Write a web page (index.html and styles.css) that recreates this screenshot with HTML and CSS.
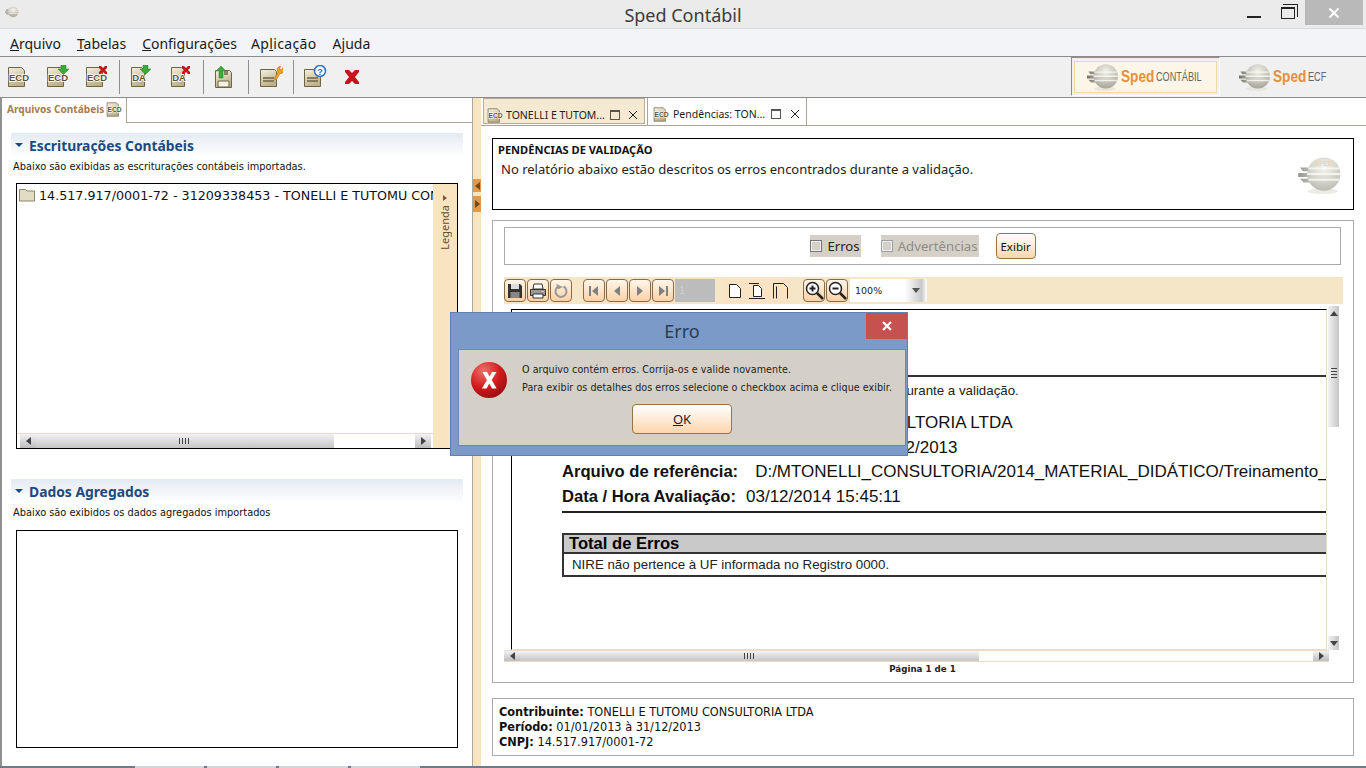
FILE: index.html
```html
<!DOCTYPE html>
<html lang="pt-BR">
<head>
<meta charset="utf-8">
<title>Sped Contábil</title>
<link rel="stylesheet" href="styles.css">
</head>
<body>
<svg class="defs" width="0" height="0" aria-hidden="true">
  <defs>
    <linearGradient id="docFill" x1="0" y1="0" x2="0.4" y2="1"><stop offset="0" stop-color="#f5f1e2"/><stop offset="1" stop-color="#bdb18a"/></linearGradient>
    <linearGradient id="streak" x1="0" y1="0" x2="1" y2="0"><stop offset="0" stop-color="#6f6e66"/><stop offset="1" stop-color="#b9b7ac"/></linearGradient>
    <radialGradient id="globeFill" cx="0.5" cy="0.3" r="0.75"><stop offset="0" stop-color="#f3f2ea"/><stop offset="1" stop-color="#a3a196"/></radialGradient>
    <radialGradient id="errFill" cx="0.35" cy="0.25" r="0.85"><stop offset="0" stop-color="#f0706a"/><stop offset="0.55" stop-color="#d01a1c"/><stop offset="1" stop-color="#8e0c10"/></radialGradient>
    <symbol id="ecd" viewBox="0 0 24 24">
      <path d="M1.500 2.500h13l3 3v16h-16z" fill="url(#docFill)" stroke="#6f6545"/>
      <text x="12" y="16" text-anchor="middle" class="ic-label">ECD</text>
    </symbol>
    <symbol id="da" viewBox="0 0 24 24">
      <path d="M3.500 2.500h10l3 3v16h-13z" fill="url(#docFill)" stroke="#6f6545"/>
      <text x="11" y="16" text-anchor="middle" class="ic-label">DA</text>
    </symbol>
    <symbol id="down" viewBox="0 0 24 24"><path d="M15 0h5v4h3l-5.500 5.500L12 4h3z" fill="#3fa83a" stroke="#2f7f2c" stroke-width=".5"/></symbol>
    <symbol id="redx" viewBox="0 0 24 24"><path d="M14 1l2 0 2 2 2-2 2 0 0 2-2 2 2 2v2h-2l-2-2-2 2h-2v-2l2-2-2-2z" fill="#c4161c"/></symbol>
    <symbol id="globe" viewBox="0 0 46 40">
      <ellipse cx="26" cy="37" rx="16" ry="3" fill="#e6e6de"/>
      <path d="M2 12h14v4H5zM0 18h16v4H0zM2 24h14v4H6z" fill="url(#streak)"/>
      <circle cx="27" cy="19" r="17.500" fill="url(#globeFill)"/>
      <path d="M11 13h32M9.500 19h35M11 25h32" stroke="#fbfbf6" stroke-width="2" opacity=".8"/>
    </symbol>
    <symbol id="folder" viewBox="0 0 16 14"><path d="M.5 3V1.500h6l1.500 1.500h7.500v10H.5z" fill="#e2dcc2" stroke="#8b8468"/></symbol>
  </defs>
</svg>
<div class="app">
  <header class="titlebar">
    <svg class="app-icon" width="14" height="12" viewBox="0 0 46 40"><use href="#globe"/></svg>
    <span class="app-title">Sped Contábil</span>
    <div class="win-buttons">
      <span class="win-min"></span>
      <span class="win-max"></span>
      <span class="win-close"><svg width="12" height="12" viewBox="0 0 12 12"><path d="M1.500 1.500l9 9M10.500 1.500l-9 9" stroke="#fff" stroke-width="2"/></svg></span>
    </div>
  </header>
  <nav class="menubar">
    <span><u>A</u>rquivo</span><span><u>T</u>abelas</span><span><u>C</u>onfigurações</span><span class="menu-app">Ap<u>l</u>icação</span><span>A<u>j</u>uda</span>
  </nav>
  <div class="toolbar">
    <div class="tb-group g1">
      <svg class="tb-icon" viewBox="0 0 24 24"><use href="#ecd"/></svg>
      <svg class="tb-icon" viewBox="0 0 24 24"><use href="#ecd"/><use href="#down"/></svg>
      <svg class="tb-icon" viewBox="0 0 24 24"><use href="#ecd"/><use href="#redx"/></svg>
    </div>
    <div class="tb-group g2">
      <svg class="tb-icon" viewBox="0 0 24 24"><use href="#da"/><use href="#down"/></svg>
      <svg class="tb-icon" viewBox="0 0 24 24"><use href="#da"/><use href="#redx"/></svg>
    </div>
    <div class="tb-group g3">
      <svg class="tb-icon" viewBox="0 0 24 24">
        <path d="M4.500 5.500h14l2 2v15h-16z" fill="url(#docFill)" stroke="#6f6545"/>
        <path d="M7 16h11v6H7z" fill="#f5f1e2" stroke="#6f6545"/><path d="M13 6h4v4h-4z" fill="#8d8366"/>
        <path d="M10 1l5 5h-3v7H8V6H5z" fill="#3fa83a" stroke="#2f7f2c" stroke-width=".5"/>
      </svg>
    </div>
    <div class="tb-group g4">
      <svg class="tb-icon" viewBox="0 0 24 24">
        <path d="M1.500 4.500h14l2 2v15h-16z" fill="url(#docFill)" stroke="#6f6545"/>
        <path d="M4 13h11M4 16h11" stroke="#6f6545" stroke-width="1.500"/>
        <path d="M15 14l4-7a3.500 3.500 0 0 1 .5-5l2-1-1 3 2 1 1.500-2.500a3.500 3.500 0 0 1-3 6l-3.500 6z" fill="#ee9f21" stroke="#a86c10" stroke-width=".5"/>
      </svg>
    </div>
    <div class="tb-group g5">
      <svg class="tb-icon" viewBox="0 0 24 24">
        <path d="M1.500 4.500h14l2 2v15h-16z" fill="url(#docFill)" stroke="#6f6545"/>
        <path d="M4 13h11M4 16h11" stroke="#6f6545" stroke-width="1.500"/>
        <circle cx="17" cy="6" r="5.500" fill="#fff" stroke="#2f6fc0" stroke-width="1.500"/>
        <text x="17" y="9.500" text-anchor="middle" class="ic-help">?</text>
      </svg>
      <svg class="tb-icon" viewBox="0 0 24 24"><path d="M5 5h4l3 3 3-3h4v2l-4 5 4 5v2h-4l-3-3-3 3H5v-2l4-5-4-5z" fill="#c4161c"/></svg>
    </div>
    <div class="brand-tabs">
      <div class="brand active">
        <div class="brand-inner">
          <svg width="32" height="28" viewBox="0 0 46 40"><use href="#globe"/></svg>
          <span class="brand-sped">Sped</span><span class="brand-sub">CONTÁBIL</span>
        </div>
      </div>
      <div class="brand">
        <div class="brand-inner plain">
          <svg width="32" height="28" viewBox="0 0 46 40"><use href="#globe"/></svg>
          <span class="brand-sped">Sped</span><span class="brand-sub ecf">ECF</span>
        </div>
      </div>
    </div>
  </div>
  <main class="workspace">
    <section class="left-pane">
      <div class="left-tabs">
        <div class="left-tab">
          <span>Arquivos Contábeis</span>
          <svg width="17" height="17" viewBox="0 0 24 24"><use href="#ecd"/></svg>
        </div>
      </div>
      <div class="section-head"><span class="tri"></span>Escriturações Contábeis</div>
      <p class="section-desc">Abaixo são exibidas as escriturações contábeis importadas.</p>
      <div class="list-box tall">
        <div class="list-body">
          <div class="list-scroll">
            <div class="tree-row">
              <svg class="tree-icon" width="16" height="14" viewBox="0 0 16 14"><use href="#folder"/></svg>
              <span class="tree-text">14.517.917/0001-72 - 31209338453 - TONELLI E TUTOMU CONSULTORIA LTDA</span>
            </div>
          </div>
          <div class="hscroll small">
            <span class="arrow-l"></span>
            <span class="thumb left-thumb"><i class="grip"></i></span>
            <span class="arrow-r"></span>
          </div>
        </div>
        <div class="legend"><span class="legend-arrow"></span><span class="legend-text">Legenda</span></div>
      </div>
      <div class="section-head second"><span class="tri"></span>Dados Agregados</div>
      <p class="section-desc">Abaixo são exibidos os dados agregados importados</p>
      <div class="list-box short"></div>
    </section>
    <div class="splitter">
      <span class="split-btn top"><i class="tri-l"></i></span>
      <span class="split-btn"><i class="tri-r"></i></span>
    </div>
    <section class="right-pane">
      <div class="doc-tabs">
        <div class="doc-tab inactive">
          <svg class="tab-icon" width="17" height="17" viewBox="0 0 24 24"><use href="#ecd"/></svg>
          <span class="doc-tab-text">TONELLI E TUTOM...</span>
          <span class="tab-max"></span>
          <svg class="tab-x" width="10" height="10" viewBox="0 0 10 10"><path d="M1 1l8 8M9 1l-8 8" stroke="#222" stroke-width="1"/></svg>
        </div>
        <div class="doc-tab">
          <svg class="tab-icon" width="17" height="17" viewBox="0 0 24 24"><use href="#ecd"/></svg>
          <span class="doc-tab-text">Pendências: TON...</span>
          <span class="tab-max"></span>
          <svg class="tab-x" width="10" height="10" viewBox="0 0 10 10"><path d="M1 1l8 8M9 1l-8 8" stroke="#222" stroke-width="1"/></svg>
        </div>
      </div>
      <div class="info-box">
        <h1>PENDÊNCIAS DE VALIDAÇÃO</h1>
        <p>No relatório abaixo estão descritos os erros encontrados durante a validação.</p>
        <svg class="info-globe" width="50" height="38" viewBox="0 0 46 40"><use href="#globe"/><text x="27" y="11" text-anchor="middle" class="ic-sped">SPED</text></svg>
      </div>
      <div class="panel">
        <div class="filter">
          <label class="check"><span class="box"></span>Erros</label>
          <label class="check disabled"><span class="box"></span>Advertências</label>
          <button class="exibir" type="button">Exibir</button>
        </div>
        <div class="viewer-bar">
          <span class="vb"><svg width="16" height="16" viewBox="0 0 16 16"><path d="M1 1h12l2 2v12H1z" fill="#333"/><path d="M4 1h8v5H4z" fill="#ddd"/><path d="M3.500 9h9v6h-9z" fill="#888"/></svg></span>
          <span class="vb"><svg width="18" height="16" viewBox="0 0 18 16"><path d="M5 1h8l1 5H4z" fill="#fff" stroke="#333"/><path d="M1.500 6.500h15v6h-15z" fill="#999" stroke="#333"/><path d="M4 11h10v4H4z" fill="#fff" stroke="#333"/><path d="M12 8h3v1h-3z" fill="#e8d020"/></svg></span>
          <span class="vb last"><svg width="16" height="16" viewBox="0 0 16 16"><path d="M10.500 3.500a5.500 5.500 0 1 1-5 0" fill="none" stroke="#999" stroke-width="2"/><path d="M4 0v6h5z" fill="#999" transform="rotate(-25 5 3)"/></svg></span>
          <span class="vb"><svg width="12" height="12" viewBox="0 0 12 12"><path d="M1 1h2v10H1zM10 1v10L4 6z" fill="#808080"/></svg></span>
          <span class="vb"><svg width="12" height="12" viewBox="0 0 12 12"><path d="M9 1v10L3 6z" fill="#808080"/></svg></span>
          <span class="vb"><svg width="12" height="12" viewBox="0 0 12 12"><path d="M3 1v10l6-5z" fill="#808080"/></svg></span>
          <span class="vb"><svg width="12" height="12" viewBox="0 0 12 12"><path d="M9 1h2v10H9zM2 1v10l6-5z" fill="#808080"/></svg></span>
          <span class="page-input">1</span>
          <div class="page-modes">
            <svg width="12" height="16" viewBox="0 0 12 16"><path d="M.5 1.500h7l4 4v9H.5z" fill="#fff" stroke="#222"/></svg>
            <svg width="16" height="16" viewBox="0 0 16 16"><path d="M0 .5h10M0 15.500h16" stroke="#222"/><path d="M4.500 2.500h5l3 3v8h-8z" fill="#fff" stroke="#222"/></svg>
            <svg width="15" height="16" viewBox="0 0 15 16"><path d="M.5 15.500V.5h10l4 4v11M3.500 15.500V3.500" fill="none" stroke="#222"/></svg>
          </div>
          <span class="vb"><svg width="19" height="19" viewBox="0 0 19 19"><circle cx="7.500" cy="7.500" r="6" fill="#fff" stroke="#222" stroke-width="1.500"/><path d="M4.500 7.500h6M7.500 4.500v6" stroke="#222" stroke-width="2"/><path d="M12 12l6 6" stroke="#222" stroke-width="2.500"/></svg></span>
          <span class="vb"><svg width="19" height="19" viewBox="0 0 19 19"><circle cx="7.500" cy="7.500" r="6" fill="#fff" stroke="#222" stroke-width="1.500"/><path d="M4.500 7.500h6" stroke="#222" stroke-width="2"/><path d="M12 12l6 6" stroke="#222" stroke-width="2.500"/></svg></span>
          <span class="zoom-val">100%</span>
          <span class="zoom-drop"><i></i></span>
        </div>
        <div class="report-row">
          <div class="report">
            <div class="report-head"></div>
            <div class="report-body">
              <p class="r-intro">No relatório abaixo estão descritos os erros encontrados durante a validação.</p>
              <p class="r-line first"><b>Contribuinte:</b><span class="v1">TONELLI E TUTOMU CONSULTORIA LTDA</span></p>
              <p class="r-line"><b>Período de Escrituração:</b><span class="v2">01/01/2013 à 31/12/2013</span></p>
              <p class="r-line"><b>Arquivo de referência:</b><span class="v3">D:/MTONELLI_CONSULTORIA/2014_MATERIAL_DIDÁTICO/Treinamento_ECD</span></p>
              <p class="r-line"><b>Data / Hora Avaliação:</b><span class="v4">03/12/2014 15:45:11</span></p>
              <div class="r-rule"></div>
              <div class="r-table">
                <div class="r-th">Total de Erros</div>
                <div class="r-td">NIRE não pertence à UF informada no Registro 0000.</div>
              </div>
            </div>
          </div>
          <div class="vscroll">
            <span class="arrow-u"></span>
            <span class="v-thumb"><i class="grip-v"></i></span>
            <span class="arrow-d"></span>
          </div>
        </div>
        <div class="hscroll viewer-h">
          <span class="arrow-l"></span>
          <span class="thumb viewer-thumb"><i class="grip"></i></span>
          <span class="arrow-r"></span>
        </div>
        <div class="pager">Página 1 de 1</div>
      </div>
      <div class="summary">
        <div><b>Contribuinte:</b> TONELLI E TUTOMU CONSULTORIA LTDA</div>
        <div><b>Período:</b> 01/01/2013 à 31/12/2013</div>
        <div><b>CNPJ:</b> 14.517.917/0001-72</div>
      </div>
    </section>
  </main>
  <footer class="taskstrip"><i></i><i></i><i></i><i></i></footer>
</div>
<div class="dialog" role="dialog">
  <div class="dialog-title">Erro
    <span class="dialog-close"><svg width="12" height="12" viewBox="0 0 12 12"><path d="M2 2l8 8M10 2l-8 8" stroke="#fff" stroke-width="2.200"/></svg></span>
  </div>
  <div class="dialog-body">
    <div class="dialog-msg">
      <svg class="err-icon" width="38" height="38" viewBox="0 0 38 38"><circle cx="19" cy="19" r="18" fill="url(#errFill)"/><path d="M12.500 11h4.500l2.500 4.500 2.500-4.500h4.500l-4.800 8 5 8.500h-4.700l-2.700-5-2.700 5h-4.700l5-8.500z" fill="#fff"/></svg>
      <div class="dialog-text">
        <p>O arquivo contém erros. Corrija-os e valide novamente.</p>
        <p>Para exibir os detalhes dos erros selecione o checkbox acima e clique exibir.</p>
      </div>
    </div>
    <button class="dialog-ok" type="button"><u>O</u>K</button>
  </div>
</div>
</body>
</html>
```
FILE: styles.css
```css
* { box-sizing: border-box; }
html, body { margin: 0; padding: 0; height: 768px; overflow: hidden; background: #fff; }
body { position: relative; font-family: "Noto Sans", sans-serif; color: #000; }
p, h1 { margin: 0; }
.defs { position: absolute; }
.ic-label { font: bold 9.500px "Liberation Sans", sans-serif; fill: #5b5233; stroke: #fff; stroke-width: 1.500px; paint-order: stroke; }
.ic-help { font: bold 9px "Liberation Sans", sans-serif; fill: #2f6fc0; }
.ic-sped { font: bold 7px "Liberation Sans", sans-serif; fill: #e3c69a; }

.app { display: flex; flex-direction: column; height: 768px; }

/* title bar */
.titlebar { position: relative; flex: 0 0 29px; display: flex; align-items: center; background: #ebebeb; border-bottom: 1px solid #dadada; }
.app-icon { margin: -4px 0 0 5px; }
.app-title { position: absolute; left: 0; right: 0; top: 2px; text-align: center; font-size: 18px; line-height: 26px; color: #3c3c3c; }
.win-buttons { margin-left: auto; display: flex; align-self: flex-start; height: 25px; }
.win-min { width: 14px; height: 2px; margin: 16px 20px 0 0; background: #222; }
.win-max { position: relative; width: 14px; height: 12px; margin: 7px 10px 0 0; border: 1px solid #222; border-top-width: 2px; }
.win-max::before { content: ""; position: absolute; left: 1px; top: -5px; width: 14px; height: 12px; border: 1px solid #222; border-left: 0; border-bottom: 0; }
.win-close { width: 58px; height: 25px; margin-right: 3px; background: #b9b9b9; display: flex; align-items: center; justify-content: center; }

/* menu */
.menubar { flex: 0 0 28px; display: flex; gap: 16px; align-items: center; padding: 2px 0 0 10px; background: #f3f4f7; border-bottom: 1px solid #8b8b8b; font-size: 14px; color: #1a1a1a; }
.menu-app { margin-left: -2px; letter-spacing: .35px; }

/* toolbar */
.toolbar { flex: 0 0 41px; display: flex; background: #f0f0f0; border-bottom: 1px solid #8b8b8b; }
.tb-group { display: flex; gap: 15px; align-items: center; margin: 3px 0; border-right: 1px solid #8f8f8f; height: 34px; align-self: center; }
.tb-icon { width: 24px; height: 24px; display: block; }
.g1 { width: 120px; padding-left: 7px; }
.g2 { width: 84px; padding-left: 8px; gap: 16px; }
.g3 { width: 45px; padding-left: 7px; }
.g4 { width: 45px; padding-left: 10px; }
.g5 { padding-left: 9px; gap: 13px; border-right: 0; }
.brand-tabs { margin-left: auto; display: flex; height: 39px; }
.brand { width: 149px; height: 39px; padding: 3px; }
.brand.active { border: 1px solid #8e8e8e; border-right-color: #fff; border-bottom-color: #fff; padding: 3px 2px 2px; }
.brand + .brand { width: 146px; }
.brand-inner { height: 100%; display: flex; align-items: center; padding-left: 12px; background: #fdf5e8; border: 1px solid #f3d8a6; }
.brand-inner.plain { background: none; border: 0; padding-left: 16px; }
.brand-sped { display: inline-block; width: 33px; margin-left: 2px; font: bold 17px "Liberation Sans", sans-serif; color: #e29239; transform: scaleX(.8); transform-origin: left center; }
.brand-sub { display: inline-block; width: 45px; margin-left: 2px; white-space: nowrap; font: 12px "Liberation Sans", sans-serif; color: #666; transform: scaleX(.76); transform-origin: left center; }
.brand-sub.ecf { width: 18px; }

/* workspace */
.workspace { flex: 1; min-height: 0; display: flex; }
.left-pane { flex: 0 0 473px; border-left: 2px solid #909090; border-right: 1px solid #aaa9a0; background: #fff; }
.left-tabs { height: 25px; border-bottom: 1px solid #a8a598; }
.left-tab { width: 125px; height: 25px; display: flex; align-items: center; gap: 2px; padding: 0 0 3px 5px; background: #fff; border-right: 1px solid #a8a598; font: bold 10.100px "Noto Sans", sans-serif; color: #a87c4f; white-space: nowrap; }
.section-head { height: 24px; margin: 10px 9px 0 9px; padding-left: 4px; display: flex; align-items: center; background: linear-gradient(#e4eaf3, #fff); font-size: 13.850px; font-weight: 700; color: #1c4a80; }
.section-head.second { margin-top: 30px; }
.tri { width: 0; height: 0; margin-right: 6px; border: 4px solid transparent; border-top: 4px solid #1c4a80; margin-top: 4px; }
.section-desc { margin: 3px 0 0 11px; height: 14px; font: 9.800px/14px "DejaVu Sans", sans-serif; color: #111; }
.list-box { margin: 9px 0 0 14px; width: 442px; border: 1px solid #000; display: flex; }
.list-box.tall { height: 266px; }
.list-box.short { height: 218px; margin-top: 10px; }
.list-body { flex: 1; min-width: 0; display: flex; flex-direction: column; }
.list-scroll { flex: 1; min-height: 0; overflow: hidden; }
.tree-row { display: flex; align-items: center; gap: 4px; height: 22px; padding: 0 0 0 2px; white-space: nowrap; color: #111; }
.tree-icon { flex: none; }
.tree-text { font: 12.700px "DejaVu Sans", sans-serif; }
.legend { flex: 0 0 24px; background: #f9e4c1; display: flex; flex-direction: column; align-items: center; padding: 11px 2px 0 0; }
.legend-arrow { width: 0; height: 0; border: 3px solid transparent; border-left: 4px solid #7a5a36; margin-left: 4px; }
.legend-text { writing-mode: vertical-rl; transform: rotate(180deg); margin-top: 4px; font: 11px "Noto Sans", sans-serif; color: #6b4a25; }

.hscroll { position: relative; flex: 0 0 auto; display: flex; align-items: center; height: 15px; border-top: 1px solid #ecdcc6; background: #fff; }
.arrow-l, .arrow-r { position: absolute; top: 0; width: 16px; height: 100%; background: linear-gradient(#f2f2f2, #bdbdbd); display: flex; align-items: center; justify-content: center; }
.arrow-l { left: 3px; } .arrow-r { right: 2px; }
.arrow-l::before { content: ""; border: 4px solid transparent; border-right: 5px solid #444; border-left: 0; }
.arrow-r::before { content: ""; border: 4px solid transparent; border-left: 5px solid #444; border-right: 0; }
.thumb { position: absolute; top: 0; bottom: 0; background: linear-gradient(#f3f3f3, #c5c5c5); display: flex; align-items: center; justify-content: center; }
.left-thumb { left: 19px; width: 298px; }
.viewer-thumb { left: 16px; width: 459px; }
.grip { display: block; width: 12px; height: 6px; background: repeating-linear-gradient(90deg, #444 0 1px, transparent 1px 3px); }

/* splitter */
.splitter { flex: 0 0 8px; display: flex; flex-direction: column; gap: 4px; padding-top: 81px; background: #f9e4c1; }
.split-btn { height: 16px; background: #e09a4c; display: flex; align-items: center; justify-content: center; }
.split-btn.top { height: 13px; }
.tri-l { border: 4px solid transparent; border-right: 5px solid #6e4a1d; border-left: 0; }
.tri-r { border: 4px solid transparent; border-left: 5px solid #6e4a1d; border-right: 0; }

/* right pane */
.right-pane { flex: 1; min-width: 0; display: flex; flex-direction: column; padding: 0 12px 0 11px; }
.doc-tabs { flex: 0 0 27px; display: flex; margin: 0 -12px 0 -11px; padding-left: 2px; gap: 2px; border-bottom: 1px solid #a8a598; }
.doc-tab { width: 160px; height: 27px; display: flex; align-items: center; gap: 3px; padding: 5px 0 0 5px; background: #fff; border: 1px solid #a8a598; border-bottom: 0; border-top: 0; font: 10.500px "Noto Sans", sans-serif; color: #222; }
.doc-tab.inactive { width: 162px; height: 26px; padding: 8px 0 0 3px; gap: 2px; background: #f6e9d2; border: 1px solid #b5ad98; }
.tab-icon { flex: none; }
.doc-tab-text { flex: 1; white-space: nowrap; overflow: hidden; }
.tab-max { width: 10px; height: 10px; border: 1px solid #555; border-top-width: 2px; margin-right: 6px; }
.tab-x { margin-right: 6px; }

.info-box { position: relative; flex: 0 0 72px; margin-top: 12px; padding: 4px 5px; border: 1px solid #000; }
.info-box h1 { font: bold 11.100px/14px "Noto Sans", sans-serif; color: #111; }
.info-box p { margin: 3px 0 0 3px; font-size: 13px; line-height: 19px; color: #222; }
.info-globe { position: absolute; right: 8px; top: 17px; opacity: .75; }

.panel { flex: 0 0 463px; margin-top: 10px; padding: 6px 12px 0 11px; border: 1px solid #aaa; display: flex; flex-direction: column; }
.filter { flex: 0 0 38px; display: flex; align-items: center; justify-content: center; gap: 20px; border: 1px solid #aaa; font-size: 13.200px; padding-left: 1px; }
.check { height: 22px; display: flex; align-items: center; gap: 5px; padding-right: 1px; background: #d4d0c8; color: #222; }
.check.disabled { color: #8f8c85; }
.box { width: 12px; height: 12px; background: #d4d0c8; border: 1px solid #777; box-shadow: inset 0 0 0 1px #eee; }
.check.disabled .box { border-color: #a0a0a0; }
.exibir { width: 40px; height: 26px; margin-left: -3px; padding: 0; border: 1px solid #9a7345; border-radius: 4px; background: linear-gradient(#fff, #fdd6ad); font: 11.500px "Noto Sans", sans-serif; color: #111; }
.viewer-bar { flex: 0 0 27px; margin-top: 12px; margin-right: -2px; display: flex; align-items: center; gap: 1px; background: #f5e6c8; }
.vb { flex: 0 0 22px; height: 23px; display: flex; align-items: center; justify-content: center; border: 1px solid #8a6a45; border-radius: 4px; background: linear-gradient(#fff6ea, #fbd1a6); }
.vb.last { margin-right: 10px; }
.page-input { width: 40px; height: 23px; padding-left: 4px; background: #bcbcbc; color: #d0d0d0; font: 11px/23px "Liberation Sans", sans-serif; }
.page-modes { width: 65px; height: 24px; margin: 0 13px 0 8px; padding-left: 5px; display: flex; align-items: center; gap: 8px; background: #f9e3c4; }
.zoom-val { width: 55px; height: 23px; margin-left: 1px; padding-left: 5px; background: #fff; font: 9.500px/23px "DejaVu Sans", sans-serif; color: #222; }
.zoom-drop { width: 22px; height: 23px; margin-left: -1px; display: flex; align-items: center; justify-content: center; background: linear-gradient(90deg, #fff, #c9c9c9 75%, #fff); }
.zoom-drop i { border: 4px solid transparent; border-top: 5px solid #555; border-bottom: 0; }

.report-row { flex: 0 0 344px; margin-top: 2px; display: flex; }
.report { flex: 1; min-width: 0; margin: 3px 0 0 7px; overflow: hidden; background: #fff; border-left: 1px solid #000; border-top: 1px solid #000; border-right: 1px solid #ecdcc6; border-bottom: 1px solid #ecdcc6; }
.report-head { height: 67px; border-bottom: 2px solid #333; }
.report-body { padding-left: 50px; font-family: "Liberation Sans", sans-serif; white-space: nowrap; }
.r-intro { margin: 6px 0 0; font-size: 13.300px; line-height: 15px; color: #222; }
.r-line { height: 24.500px; line-height: 24px; font-size: 17px; color: #111; }
.r-line b { font-size: 16.600px; }
.r-line.first { margin-top: 13px; }
.v1 { margin-left: 11px; }
.v2 { margin-left: 10px; }
.v3 { margin-left: 17px; }
.v4 { margin-left: 10px; }
.r-rule { height: 2px; margin-top: 2px; background: #222; }
.r-table { margin-top: 20px; border: 2px solid #333; border-right: 0; }
.r-th { height: 19px; padding-left: 5px; background: #c9c9c9; border-bottom: 2px solid #333; font: bold 16.600px/18px "Liberation Sans", sans-serif; }
.r-td { height: 21px; padding-left: 8px; font-size: 13.300px; line-height: 21px; color: #222; }
.vscroll { position: relative; flex: 0 0 14px; background: #fff; }
.arrow-u, .arrow-d { position: absolute; left: 1px; width: 11px; height: 14px; display: flex; align-items: center; justify-content: center; }
.arrow-u { top: 0; background: linear-gradient(90deg, #f2f2f2, #c5c5c5); }
.arrow-d { bottom: 0; background: linear-gradient(90deg, #f2f2f2, #c5c5c5); }
.arrow-u::before { content: ""; border: 4px solid transparent; border-bottom: 5px solid #444; border-top: 0; }
.arrow-d::before { content: ""; border: 4px solid transparent; border-top: 5px solid #444; border-bottom: 0; }
.v-thumb { position: absolute; left: 1px; top: 14px; width: 11px; height: 107px; background: linear-gradient(90deg, #f3f3f3, #c5c5c5); display: flex; align-items: center; justify-content: center; }
.grip-v { display: block; width: 6px; height: 12px; background: repeating-linear-gradient(#444 0 1px, transparent 1px 3px); }
.hscroll.viewer-h { height: 12px; margin-right: 12px; border-top: 1px solid #ecdcc6; border-bottom: 1px solid #ecdcc6; }
.viewer-h .arrow-l { left: 0; } .viewer-h .arrow-r { right: 0; }
.pager { height: 14px; text-align: center; font: bold 8.700px/14px "DejaVu Sans", sans-serif; color: #222; }
.summary { flex: 0 0 58px; margin-top: 15px; padding: 5px 6px; border: 1px solid #aaa; font: 12.600px/15px "DejaVu Sans Condensed", "DejaVu Sans", sans-serif; color: #111; }

.taskstrip { flex: 0 0 2px; display: flex; gap: 3px; padding-left: 135px; background: #6e7a8a; }
.taskstrip i { display: block; width: 69px; background: #cfd6e0; }

/* dialog */
.dialog { position: absolute; left: 450px; top: 312px; width: 458px; height: 144px; padding: 0 1px 9px 7px; background: #7b9ac7; border: 1px solid #6080b2; display: flex; flex-direction: column; }
.dialog-title { position: relative; flex: 0 0 36px; text-align: center; font-size: 18px; line-height: 36px; color: #2b3a55; }
.dialog-close { position: absolute; right: -1px; top: 0; width: 41px; height: 26px; display: flex; align-items: center; justify-content: center; background: #c75050; }
.dialog-body { flex: 1; background: #d4d0c8; border: 1px solid #6a88b5; display: flex; flex-direction: column; align-items: center; }
.dialog-msg { align-self: stretch; display: flex; gap: 14px; padding: 11px 0 0 11px; height: 54px; }
.err-icon { flex: none; }
.dialog-text { font: 9.600px/18px "DejaVu Sans", sans-serif; letter-spacing: .04px; color: #222; white-space: nowrap; }
.dialog-ok { width: 100px; height: 30px; padding: 0; border: 1px solid #9a7345; border-radius: 4px; background: linear-gradient(#fff, #fdd6ad); font: 13px "Noto Sans", sans-serif; color: #222; }
```
